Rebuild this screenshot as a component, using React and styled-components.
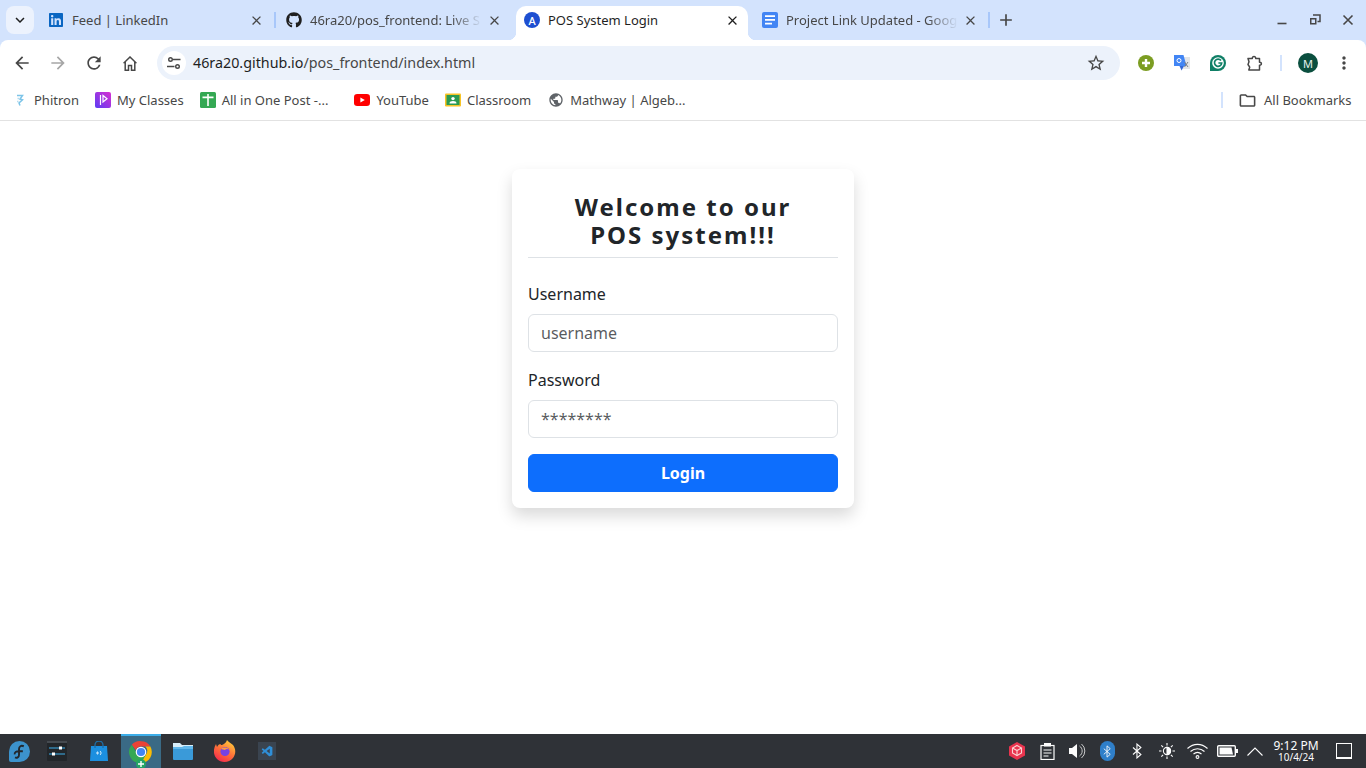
import React from 'react';
import styled, { createGlobalStyle } from 'styled-components';
import { FaGithub, FaLinkedin } from 'react-icons/fa';
import { VscVscode } from 'react-icons/vsc';
import {
  MdArrowBack, MdArrowForward, MdRefresh, MdStarBorder,
  MdMoreVert, MdClose, MdAdd, MdOutlineFolder, MdKeyboardArrowDown, MdPublic,
} from 'react-icons/md';

const Global = createGlobalStyle`
  html, body { margin: 0; padding: 0; height: 100%; background: #fff; }
  #root { height: 100vh; }
  * { box-sizing: border-box; }
`;

const Screen = styled.div`
  height: 768px; width: 1366px; overflow: hidden; display: flex; flex-direction: column;
  font-family: "Noto Sans", sans-serif; background: #fff;
`;

/* ---------- tab strip ---------- */
const TabStrip = styled.div`
  height: 40px; flex: none; background: #d3e3fd; display: flex; align-items: flex-start;
  padding: 6px 0 0 6px;
`;
const TabSearch = styled.div`
  width: 28px; height: 28px; border-radius: 8px; background: #ecf2fd; color: #1f1f1f;
  display: flex; align-items: center; justify-content: center; font-size: 18px; margin-right: 6px;
`;
const Tab = styled.div`
  position: relative; width: 238px; height: 34px; flex: none; display: flex; align-items: center;
  padding: 0 0 6px 8px; font-size: 13px; color: ${p => (p.$active ? '#1f1f1f' : '#474747')};
  background: ${p => (p.$active ? '#fff' : 'transparent')};
  border-radius: ${p => (p.$active ? '10px 10px 0 0' : '0')};
  ${p => p.$active && `
    width: 232px; margin-right: 6px;
    &::before, &::after {
      content: ''; position: absolute; bottom: 0; width: 8px; height: 8px;
    }
    &::before { left: -8px; background: radial-gradient(circle at 0 0, transparent 8px, #fff 8.5px); }
    &::after { right: -8px; background: radial-gradient(circle at 100% 0, transparent 8px, #fff 8.5px); }
  `}
  ${p => p.$divider && `
    &::after {
      content: ''; position: absolute; right: 2px; top: 6px; width: 2px; height: 16px; background: #a8c7fa;
    }
  `}
`;
const TabTitle = styled.span`
  flex: 1; min-width: 0; margin-left: 8px; white-space: nowrap; overflow: hidden;
  ${p => p.$fade && `
    -webkit-mask-image: linear-gradient(to right, #000 82%, transparent 100%);
    mask-image: linear-gradient(to right, #000 82%, transparent 100%);
  `}
`;
const TabClose = styled.span`
  width: 16px; height: 16px; margin: 0 ${p => p.$end}px 0 4px; flex: none; display: flex;
  align-items: center; justify-content: center; font-size: 15px;
  color: ${p => (p.$active ? '#1f1f1f' : '#474747')};
`;
const NewTab = styled.div`
  width: 20px; height: 20px; margin: 4px 0 0 4px; display: flex; align-items: center;
  justify-content: center; color: #474747; font-size: 20px;
`;
const WindowControls = styled.div`
  margin-left: auto; display: flex; align-items: center; height: 28px; color: #474747; padding-right: 1.5px;
`;
const WinBtn = styled.span`
  width: 33px; display: flex; justify-content: center; align-items: center;
`;
const FaviconA = styled.span`
  width: 16px; height: 16px; border-radius: 50%; background: #1d4fd1; color: #fff; flex: none;
  display: flex; align-items: center; justify-content: center; font-size: 11px; font-weight: 500;
`;

/* ---------- toolbar ---------- */
const TopBand = styled.div`
  background: #d3e3fd; flex: none;
`;
const ToolbarZone = styled.div`
  background: #fff; border-radius: 8px 8px 0 0; flex: none; height: 46px;
  display: flex; align-items: center; padding: 0 0 0 4px;
`;
const NavBtn = styled.span`
  width: 36px; height: 36px; display: flex; align-items: center; justify-content: center; flex: none;
  color: ${p => (p.$off ? '#a6a6a6' : '#474747')}; font-size: 20px;
`;
const Omnibox = styled.div`
  width: 963px; height: 34px; margin-left: 9px; border-radius: 17px; background: #ecf2fb; display: flex;
  align-items: center; padding: 0 12px 0 5px; font-size: 14.3px; color: #474747; flex: none;
`;
const SiteChip = styled.span`
  width: 24px; height: 24px; border-radius: 50%; background: #fff; display: flex; align-items: center;
  justify-content: center; margin-right: 7px; flex: none;
`;
const UrlText = styled.span`padding-bottom: 2px;`;
const Host = styled.span`color: #1f1f1f;`;
const StarBtn = styled.span`
  margin-left: auto; width: 24px; height: 24px; display: flex; align-items: center; justify-content: center;
  font-size: 20px; color: #474747;
`;
const ExtGroup = styled.div`
  display: flex; align-items: center; margin-left: 8px;
`;
const ExtSlot = styled.span`
  width: 36px; height: 36px; display: flex; align-items: center; justify-content: center; flex: none;
`;
const ToolDivider = styled.span`
  width: 2px; height: 16px; background: #d3e3fd; flex: none; margin: 0 8px;
`;
const Avatar = styled.span`
  width: 20px; height: 20px; border-radius: 50%; background: #0b4f3f; color: #e6f2ee; font-size: 11px;
  display: flex; align-items: center; justify-content: center;
`;

/* ---------- bookmarks ---------- */
const BookmarkBar = styled.div`
  height: 35px; flex: none; background: #fff; border-bottom: 1px solid #e2e2e2; display: flex;
  align-items: center; padding: 0 14.5px 6px 12px; font-size: 13px; color: #474747;
`;
const Bookmark = styled.div`
  display: flex; align-items: center; gap: ${p => p.$gap || 6}px; white-space: nowrap; margin-right: ${p => p.$mr}px;
`;
const BarDivider = styled.span`
  width: 2px; height: 16px; background: #d3e3fd; margin-left: auto; margin-right: 15px;
`;

/* ---------- page ---------- */
const Page = styled.main`
  flex: 1; min-height: 0; background: #fff; padding-top: 48px; display: flex; justify-content: center;
  align-items: flex-start; color: #212529;
`;
const Card = styled.form`
  width: 342px; background: #fff; border-radius: 8px; padding: 24px 16px 16px;
  box-shadow: 0 8px 16px rgba(0,0,0,.15);
`;
const Title = styled.h1`
  margin: 0 0 24px; padding-bottom: 8px; border-bottom: 1px solid #dee2e6; font-size: 24px; line-height: 28px;
  font-weight: 700; text-align: center; letter-spacing: 2px;
`;
const Field = styled.div`margin-bottom: 16px;`;
const Label = styled.label`
  display: block; font-size: 16px; line-height: 24px; margin-bottom: 8px;
`;
const Input = styled.input`
  display: block; width: 100%; height: 38px; padding: 6px 12px; font: 400 16px/24px "Noto Sans", sans-serif;
  color: #212529; background: #fff; border: 1px solid #dee2e6; border-radius: 6px; outline: none;
  &::placeholder { color: rgba(33,37,41,.75); opacity: 1; }
`;
const LoginButton = styled.button`
  display: block; width: 100%; height: 38px; border: 1px solid #0d6efd; border-radius: 6px; background: #0d6efd;
  color: #fff; font: 700 16px/24px "Noto Sans", sans-serif; padding: 6px 12px;
`;

/* ---------- task bar ---------- */
const TaskBar = styled.footer`
  height: 34px; flex: none; background: #2f3237; display: flex; align-items: stretch; color: #fcfcfc;
`;
const Kickoff = styled.div`
  width: 36px; padding-left: 2px; display: flex; align-items: center; justify-content: center; flex: none;
`;
const TaskItem = styled.div`
  width: ${p => (p.$active ? 40 : 42)}px; margin: 0 ${p => (p.$active ? 1 : 0)}px; flex: none; display: flex; align-items: center; justify-content: center;
  position: relative;
  ${p => p.$active && `background: #3a6a85; border-top: 2px solid #3daee9;`}
`;
const Tray = styled.div`
  margin-left: auto; display: flex; align-items: center; padding-right: 14px;
`;
const TrayItem = styled.div`
  width: ${p => p.$w || 30}px; display: flex; justify-content: center; align-items: center; flex: none;
`;
const Clock = styled.div`
  width: 56px; text-align: center; color: #fcfcfc; font-family: "Noto Sans", sans-serif; white-space: nowrap;
`;
const ClockTime = styled.div`font-size: 12px; line-height: 13px;`;
const ClockDate = styled.div`font-size: 10px; line-height: 11px;`;
const DesktopBtn = styled.div`
  width: 16px; height: 16px; border: 1.5px solid #fcfcfc; border-bottom-width: 2px; margin-left: 12px;
`;

/* ---------- drawings ---------- */
const SiteTune = () => (
  <svg width="16" height="16" viewBox="0 0 16 16" fill="none" stroke="#474747" strokeWidth="1.4">
    <circle cx="4.5" cy="4.5" r="1.8" /><path d="M7 4.5h7.5M1 11.5h7.5" /><circle cx="11.5" cy="11.5" r="1.8" />
  </svg>
);
const HomeIcon = () => (
  <svg width="14" height="15" viewBox="0 0 14 15" fill="none" stroke="#474747" strokeWidth="1.5">
    <path d="M.6 7.2 7 1l6.400 6.200" /><path d="M2.200 6v8.200h3.300V9.500h3v4.700h3.300V6" />
  </svg>
);
const PuzzleIcon = () => (
  <svg width="17" height="17" viewBox="0 0 17 17" fill="none" stroke="#474747" strokeWidth="1.5" strokeLinejoin="round">
    <path d="M2 3.500h4.300c-.3-2.800 3.700-2.800 3.400 0H13.500v3.700c2.500-.3 2.500 3.300 0 3V15H2.800l.9-2.800-1.700-2.700 1-2.700z" />
  </svg>
);
const DocsIcon = () => (
  <svg width="16" height="16" viewBox="0 0 16 16" style={{ flex: 'none' }}>
    <rect width="16" height="16" rx="2" fill="#4285f4" />
    <path d="M3 3.200h10v1.800H3zM3 7h10v1.800H3zM3 10.800h7v1.800H3z" fill="#fff" />
  </svg>
);
const Phitron = () => (
  <svg width="16" height="16" viewBox="0 0 16 16" fill="none">
    <path d="M5 3.500h5.500L8 7l2.500.8L7 11l1 2.500" stroke="#7cc4e8" strokeWidth="1.500" />
    <path d="M5.500 6.500h2M5 9.500h1.500" stroke="#b5dcef" strokeWidth="1.400" />
  </svg>
);
const MyClasses = () => (
  <svg width="16" height="16" viewBox="0 0 16 16">
    <defs><linearGradient id="mc" x1="0" y1="1" x2="1" y2="0"><stop offset="0" stopColor="#5b3df5" /><stop offset="1" stopColor="#d92fd0" /></linearGradient></defs>
    <rect width="16" height="16" rx="2" fill="url(#mc)" />
    <path d="M5.500 3v10M8 3.500l4 3.200-4 3.200z" stroke="#fff" strokeWidth="1.200" fill="none" />
  </svg>
);
const GreenT = () => (
  <svg width="16" height="16" viewBox="0 0 16 16">
    <rect width="16" height="16" rx="1.500" fill="#34a853" />
    <path d="M2.500 4.600h11v1.700h-11zM7.200 2h1.600v12H7.200z" fill="#fff" />
  </svg>
);
const YouTube = () => (
  <svg width="16" height="16" viewBox="0 0 16 16">
    <rect y="2" width="16" height="12" rx="3.200" fill="#f00" /><path d="M6.400 5.400 10.800 8l-4.400 2.600z" fill="#fff" />
  </svg>
);
const ClassroomIcon = () => (
  <svg width="16" height="16" viewBox="0 0 16 16">
    <rect y="1.500" width="16" height="13" rx="1" fill="#f7c325" /><rect x="1.500" y="3" width="13" height="10" fill="#2b9a52" />
    <circle cx="8" cy="6.600" r="1.700" fill="#fff" /><path d="M4.500 11.500c0-2 1.500-2.600 3.500-2.600s3.500.6 3.500 2.600z" fill="#fff" />
  </svg>
);
const WinMin = () => <svg width="12" height="12" viewBox="0 0 12 12"><path d="M1.500 9.500h9" stroke="#474747" strokeWidth="1.600" /></svg>;
const WinRestore = () => (
  <svg width="12" height="12" viewBox="0 0 12 12" fill="none" stroke="#474747" strokeWidth="1.500">
    <path d="M4 1h7v6.500H8.500" /><rect x="1" y="4" width="6.500" height="6.500" fill="#474747" stroke="none" /><rect x="2.500" y="5.500" width="3.500" height="3.500" fill="#d3e3fd" stroke="none" />
  </svg>
);
const WinClose = () => <svg width="12" height="12" viewBox="0 0 12 12"><path d="M1.500 1.500l9 9M10.500 1.500l-9 9" stroke="#474747" strokeWidth="1.600" /></svg>;
const ExtPlus = () => (
  <svg width="16" height="16" viewBox="0 0 16 16"><circle cx="8" cy="8" r="8" fill="#7c9d22" /><path d="M8 4v8M4 8h8" stroke="#fff" strokeWidth="2.400" /></svg>
);
const Translate = () => (
  <svg width="16" height="16" viewBox="0 0 16 16">
    <path d="M7 2h9v12H9z" fill="#e3e5e8" /><path d="M0 0h9.500l3 11H0z" fill="#4285f4" /><path d="M5.500 11h4.500L7.600 15.500z" fill="#3367d6" />
    <circle cx="5" cy="5.500" r="2" fill="none" stroke="#fff" strokeWidth="1" /><path d="M10.500 7l3.500 5M14 7l-3.500 5" stroke="#7b7f86" strokeWidth="1" />
  </svg>
);
const Grammarly = () => (
  <svg width="16" height="16" viewBox="0 0 16 16">
    <path d="M8 0a8 8 0 1 1 0 16H0V8a8 8 0 0 1 8-8z" fill="#0f7f66" /><circle cx="8" cy="8" r="5.800" fill="#fff" />
    <path d="M11 5.600A3.600 3.600 0 1 0 11.700 8H8.400" fill="none" stroke="#0f7f66" strokeWidth="1.700" />
  </svg>
);
const FedoraLogo = () => (
  <svg width="21" height="21" viewBox="0 0 22 22">
    <path d="M11 0a11 11 0 1 1 0 22H2a2 2 0 0 1-2-2v-9A11 11 0 0 1 11 0z" fill="#3c93cd" />
    <path d="M15.500 5.500c-2.800-1.200-5 .2-5 2.800v6c0 2.700-2.300 3.800-4.200 2.900M6 14c-.4-2.300 1.500-3.200 4.500-3.200h4" fill="none" stroke="#23282d" strokeWidth="2" />
  </svg>
);
const MixerIcon = () => (
  <svg width="20" height="20" viewBox="0 0 20 20">
    <rect width="20" height="20" rx="1" fill="#22262a" /><rect y="0" width="20" height="2" fill="#454a50" />
    <path d="M2 7h16M2 13h16" stroke="#3daee9" strokeWidth="1.200" /><rect x="12" y="5.500" width="3" height="3" fill="#fff" /><rect x="5" y="11.500" width="3" height="3" fill="#fff" />
  </svg>
);
const StoreIcon = () => (
  <svg width="18" height="20" viewBox="0 0 18 20">
    <path d="M1 5h16l1 15H0z" fill="#1c8fdf" /><path d="M5 7V4a4 4 0 0 1 8 0v3" stroke="#1d6ea8" strokeWidth="1.300" fill="none" />
    <path d="M7 11h1v2H7zM10 10c1.400 1 1.400 3 0 4" stroke="#d5ecfb" fill="none" />
  </svg>
);
const ChromeIcon = () => (
  <svg width="26" height="26" viewBox="0 0 48 48">
    <path d="M24 4a20 20 0 0 1 17.300 10H24a10 10 0 0 0-9.400 6.600L7 10.800A20 20 0 0 1 24 4z" fill="#ea4335" />
    <path d="M41.300 14A20 20 0 0 1 24 44l9-15.500A10 10 0 0 0 32 14z" fill="#fbbc04" />
    <path d="M24 44A20 20 0 0 1 7 10.800l8.700 15.200A10 10 0 0 0 33 28.500z" fill="#34a853" />
    <circle cx="24" cy="24" r="9.800" fill="#fff" /><circle cx="24" cy="24" r="7.600" fill="#4285f4" />
  </svg>
);
const ChromeBadge = styled.span`
  position: absolute; left: 15px; bottom: -1px; width: 10px; height: 10px; border-radius: 50%; background: #23a566;
  display: flex; align-items: center; justify-content: center;
`;
const FolderIcon = () => (
  <svg width="20" height="19" viewBox="0 0 20 19">
    <path d="M0 1h7l2 2h11v5H0z" fill="#d8eefb" /><path d="M0 5h20v12a1 1 0 0 1-1 1H1a1 1 0 0 1-1-1z" fill="#3a9ad9" /><path d="M0 5h9l2-1h9v3H0z" fill="#62b8ec" />
  </svg>
);
const Firefox = () => (
  <svg width="22" height="22" viewBox="0 0 22 22">
    <defs><linearGradient id="ff" x1="0.8" y1="0" x2="0.2" y2="1"><stop offset="0" stopColor="#ffd23a" /><stop offset=".5" stopColor="#ff7139" /><stop offset="1" stopColor="#f3264e" /></linearGradient></defs>
    <path d="M13 0c1 2 4 3 6 5 3 4 3 9 0 13-4 5-12 5-16 1C-1 15-1 9 2 4l1 3c1-2 2-3 4-3-1 1 0 1 1 1 2-1 4-2 5-5z" fill="url(#ff)" />
    <circle cx="11" cy="11.500" r="4.600" fill="#7542e5" /><path d="M7 9c2-2 6-2 8 .5-2-1-3-.7-4 .5z" fill="#ff9a3c" />
  </svg>
);
const CodeTile = styled.span`
  width: 18px; height: 18px; background: #3a4450; display: flex; align-items: center; justify-content: center;
  color: #2f8fd8; font-size: 13px;
`;
const RedCube = () => (
  <svg width="18" height="18" viewBox="0 0 18 18">
    <path d="M9 0l8 4.500v9L9 18l-8-4.500v-9z" fill="#e8344e" /><path d="M9 3.500l4.500 2.500v5L9 13.500 4.500 11V6z" fill="none" stroke="#fbd3d3" strokeWidth="1.100" /><path d="M4.500 6L9 8.500 13.500 6M9 8.500v5" stroke="#fbd3d3" strokeWidth="1.100" fill="none" />
  </svg>
);
const Clipboard = () => (
  <svg width="15" height="17" viewBox="0 0 15 17" fill="none" stroke="#fcfcfc">
    <rect x="1" y="2.500" width="13" height="14" strokeWidth="1.200" /><rect x="4" y="0" width="7" height="3.500" fill="#fcfcfc" stroke="none" /><path d="M3.500 7h8M3.500 10h8M3.500 13h5" strokeWidth="1.200" />
  </svg>
);
const Speaker = () => (
  <svg width="17" height="16" viewBox="0 0 17 16">
    <path d="M0 5h3l5-4v14l-5-4H0z" fill="#fcfcfc" /><path d="M10.500 3a6 6 0 0 1 0 10M12.500 1a9 9 0 0 1 0 14" fill="none" stroke="#c9cacb" strokeWidth="1" />
  </svg>
);
const BtGlyph = ({ h = 16, c = '#fcfcfc' }) => (
  <svg width={h * 0.62} height={h} viewBox="0 0 10 16" fill="none" stroke={c} strokeWidth="1.100">
    <path d="M1 4.500l8 7L5 15V1l4 3.500-8 7" />
  </svg>
);
const BtPill = styled.span`
  width: 15px; height: 20px; border-radius: 7.5px; background: #2f7fc9; display: flex; align-items: center; justify-content: center;
`;
const Sun = () => (
  <svg width="16" height="16" viewBox="0 0 16 16" fill="none" stroke="#fcfcfc" strokeWidth="1.100">
    <circle cx="8" cy="8" r="3.600" /><path d="M8 4.400a3.600 3.600 0 0 1 0 7.200z" fill="#fcfcfc" />
    <path d="M8 0v2.500M8 13.500V16M0 8h2.500M13.500 8H16M2.300 2.300l1.800 1.800M11.900 11.900l1.800 1.800M2.300 13.700l1.800-1.800M11.900 4.100l1.800-1.800" />
  </svg>
);
const Wifi = () => (
  <svg width="21" height="16" viewBox="0 0 21 16" fill="none" stroke="#fcfcfc" strokeWidth="1.100">
    <path d="M.5 5.500c6-5.500 14-5.500 20 0M3.500 8.500c4-3.700 10-3.700 14 0M6.500 11c2.400-2 5.600-2 8 0" /><circle cx="10.500" cy="14" r="1.400" />
  </svg>
);
const Battery = () => (
  <svg width="21" height="12" viewBox="0 0 21 12">
    <rect x=".7" y=".7" width="17.600" height="10.600" rx="1" fill="none" stroke="#fcfcfc" strokeWidth="1.400" /><path d="M2.500 2.500h12l1.500 7H2.500z" fill="#fcfcfc" /><rect x="19" y="4" width="2" height="4" fill="#fcfcfc" />
  </svg>
);
const Caret = () => <svg width="16" height="9" viewBox="0 0 16 9"><path d="M.5 8.500L8 1l7.500 7.500" fill="none" stroke="#fcfcfc" strokeWidth="1.100" /></svg>;

const tabs = [
  { title: 'Feed | LinkedIn', icon: <FaLinkedin size={16} color="#0a66c2" style={{ flex: 'none' }} />, end: 14, divider: true },
  { title: '46ra20/pos_frontend: Live S', icon: <FaGithub size={16} color="#1f1f1f" style={{ flex: 'none' }} />, fade: true, end: 14 },
  { title: 'POS System Login', icon: <FaviconA>A</FaviconA>, active: true, end: 8 },
  { title: 'Project Link Updated - Goog', icon: <DocsIcon />, fade: true, end: 14, divider: true },
];

const bookmarks = [
  { label: 'Phitron', icon: <Phitron />, mr: 16 },
  { label: 'My Classes', icon: <MyClasses />, mr: 16 },
  { label: 'All in One Post -...', icon: <GreenT />, mr: 26 },
  { label: 'YouTube', icon: <YouTube />, mr: 16 },
  { label: 'Classroom', icon: <ClassroomIcon />, mr: 17 },
  { label: 'Mathway | Algeb...', icon: <MdPublic size={16} color="#5f6368" />, mr: 0 },
];

export default function App() {
  return (
    <Screen>
      <Global />
      <TabStrip>
        <TabSearch><MdKeyboardArrowDown /></TabSearch>
        {tabs.map(t => (
          <Tab key={t.title} $active={t.active} $divider={t.divider}>
            {t.icon}
            <TabTitle $fade={t.fade}>{t.title}</TabTitle>
            <TabClose $active={t.active} $end={t.end}><MdClose /></TabClose>
          </Tab>
        ))}
        <NewTab><MdAdd /></NewTab>
        <WindowControls>
          <WinBtn><WinMin /></WinBtn>
          <WinBtn><WinRestore /></WinBtn>
          <WinBtn><WinClose /></WinBtn>
        </WindowControls>
      </TabStrip>
      <TopBand>
        <ToolbarZone>
          <NavBtn><MdArrowBack /></NavBtn>
          <NavBtn $off><MdArrowForward /></NavBtn>
          <NavBtn><MdRefresh /></NavBtn>
          <NavBtn><HomeIcon /></NavBtn>
          <Omnibox>
            <SiteChip><SiteTune /></SiteChip>
            <UrlText><Host>46ra20.github.io</Host>/pos_frontend/index.html</UrlText>
            <StarBtn><MdStarBorder /></StarBtn>
          </Omnibox>
          <ExtGroup>
            <ExtSlot><ExtPlus /></ExtSlot>
            <ExtSlot><Translate /></ExtSlot>
            <ExtSlot><Grammarly /></ExtSlot>
            <ExtSlot><PuzzleIcon /></ExtSlot>
            <ToolDivider />
            <ExtSlot><Avatar>M</Avatar></ExtSlot>
            <ExtSlot><MdMoreVert size={20} color="#474747" /></ExtSlot>
          </ExtGroup>
        </ToolbarZone>
      </TopBand>
      <BookmarkBar>
        {bookmarks.map(b => (
          <Bookmark key={b.label} $mr={b.mr}>{b.icon}<span>{b.label}</span></Bookmark>
        ))}
        <BarDivider />
        <Bookmark $gap={7} $mr={0}><MdOutlineFolder size={19} color="#474747" /><span>All Bookmarks</span></Bookmark>
      </BookmarkBar>
      <Page>
        <Card onSubmit={e => e.preventDefault()}>
          <Title>Welcome to our<br />POS system!!!</Title>
          <Field>
            <Label htmlFor="u">Username</Label>
            <Input id="u" placeholder="username" />
          </Field>
          <Field>
            <Label htmlFor="p">Password</Label>
            <Input id="p" placeholder="********" />
          </Field>
          <LoginButton type="button">Login</LoginButton>
        </Card>
      </Page>
      <TaskBar>
        <Kickoff><FedoraLogo /></Kickoff>
        <TaskItem><MixerIcon /></TaskItem>
        <TaskItem><StoreIcon /></TaskItem>
        <TaskItem $active><ChromeIcon /><ChromeBadge><svg width="6" height="6" viewBox="0 0 6 6"><path d="M3 0v6M0 3h6" stroke="#fff" strokeWidth="1.400" /></svg></ChromeBadge></TaskItem>
        <TaskItem><FolderIcon /></TaskItem>
        <TaskItem><Firefox /></TaskItem>
        <TaskItem><CodeTile><VscVscode /></CodeTile></TaskItem>
        <Tray>
          <TrayItem><RedCube /></TrayItem>
          <TrayItem><Clipboard /></TrayItem>
          <TrayItem><Speaker /></TrayItem>
          <TrayItem><BtPill><BtGlyph h={13} /></BtPill></TrayItem>
          <TrayItem><BtGlyph /></TrayItem>
          <TrayItem><Sun /></TrayItem>
          <TrayItem><Wifi /></TrayItem>
          <TrayItem><Battery /></TrayItem>
          <TrayItem $w={26}><Caret /></TrayItem>
          <Clock><ClockTime>9:12 PM</ClockTime><ClockDate>10/4/24</ClockDate></Clock>
          <DesktopBtn />
        </Tray>
      </TaskBar>
    </Screen>
  );
}
